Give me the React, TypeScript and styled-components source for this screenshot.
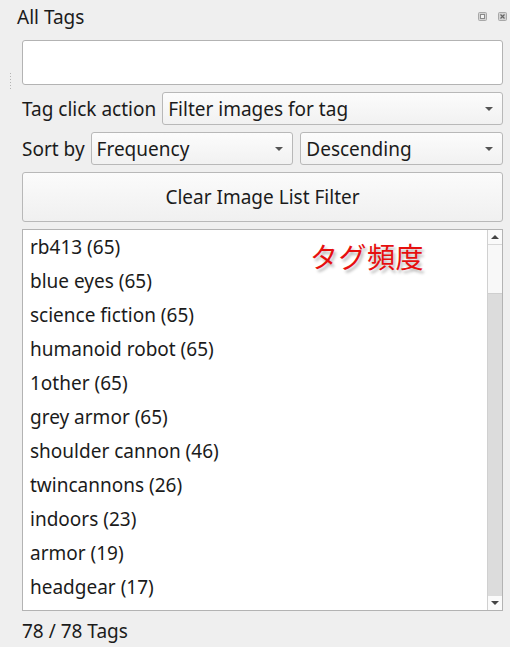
import { createGlobalStyle } from 'styled-components'
import styled from 'styled-components'

const GlobalStyle = createGlobalStyle`
  html, body {
    margin: 0;
    padding: 0;
    background: #efefef;
  }
  body {
    font-family: "Noto Sans", "Noto Sans CJK JP", sans-serif;
    color: #1b1b1b;
  }
`

const Dock = styled.div`
  width: 510px;
  height: 647px;
  box-sizing: border-box;
  display: flex;
  flex-direction: column;
  background: #efefef;
  overflow: hidden;
`

const TitleBar = styled.div`
  height: 36px;
  flex-shrink: 0;
  display: flex;
  align-items: center;
  justify-content: space-between;
  padding: 0 3px 2px 17px;
  box-sizing: border-box;
  font-size: 19px;
`

const TitleButtons = styled.div`
  display: flex;
  gap: 11px;
  align-items: center;
  margin-top: -2px;
`

const Body = styled.div`
  display: flex;
  flex-direction: column;
  gap: 7px;
  padding: 4px 7px 0 22px;
  position: relative;
  & > * {
    flex-shrink: 0;
  }
`

const Grip = styled.div`
  position: absolute;
  left: 10px;
  top: 37px;
  width: 1px;
  height: 17px;
  background-image: linear-gradient(#b4b4b4 1px, transparent 1px);
  background-size: 1px 3px;
`

const TextInput = styled.div`
  height: 45px;
  box-sizing: border-box;
  background: #fff;
  border: 1px solid #b3b3b3;
  border-radius: 3px;
`

const Row = styled.div`
  display: flex;
  align-items: center;
  gap: 7px;
  height: 33px;
  font-size: 19px;
`

const Label = styled.span`
  white-space: nowrap;
  margin-right: -1px;
`

const Combo = styled.div`
  flex: 1;
  height: 33px;
  box-sizing: border-box;
  border: 1px solid #b8b8b8;
  border-radius: 3px;
  background: linear-gradient(#fcfcfc, #f1f1f1);
  display: flex;
  align-items: center;
  justify-content: space-between;
  padding: 0 9px 0 5px;
  font-size: 19px;
  min-width: 0;
`

const Arrow = styled.span`
  width: 0;
  height: 0;
  border-left: 4px solid transparent;
  border-right: 4px solid transparent;
  border-top: 4px solid #555;
`

const Button = styled.div`
  height: 50px;
  box-sizing: border-box;
  border: 1px solid #b8b8b8;
  border-radius: 3px;
  background: linear-gradient(#fbfbfb, #f0f0f0);
  display: flex;
  align-items: center;
  justify-content: center;
  font-size: 19px;
`

const List = styled.div`
  height: 382px;
  box-sizing: border-box;
  border: 1px solid #b3b3b3;
  background: #fff;
  display: flex;
  position: relative;
`

const Items = styled.div`
  flex: 1;
  overflow: hidden;
  padding-left: 7px;
`

const Item = styled.div`
  height: 34px;
  line-height: 34px;
  font-size: 19px;
  white-space: nowrap;
`

const ScrollBar = styled.div`
  width: 14px;
  display: flex;
  flex-direction: column;
  background: #dcdcdc;
  border-left: 1px solid #d0d0d0;
`

const ScrollButton = styled.div`
  height: 14px;
  background: #fafafa;
  display: flex;
  align-items: center;
  justify-content: center;
`

const Thumb = styled.div`
  height: 50px;
  box-sizing: border-box;
  background: #f8f8f8;
  border-top: 1px solid #d8d8d8;
  border-bottom: 1px solid #cfcfcf;
`

const Track = styled.div`
  flex: 1;
  background: #dcdcdc;
`

const TriUp = styled.span`
  width: 0;
  height: 0;
  border-left: 4px solid transparent;
  border-right: 4px solid transparent;
  border-bottom: 4px solid #444;
`

const TriDown = styled.span`
  width: 0;
  height: 0;
  border-left: 4px solid transparent;
  border-right: 4px solid transparent;
  border-top: 4px solid #444;
`

const Overlay = styled.div`
  position: absolute;
  left: 287px;
  top: 6px;
  color: #e60f0f;
  font-family: "Noto Sans CJK JP", sans-serif;
  font-size: 28px;
  letter-spacing: 0.5px;
  text-shadow: 2px 3px 3px rgba(0, 0, 0, 0.28);
`

const Footer = styled.div`
  height: 29px;
  margin-top: -7px;
  padding-top: 5px;
  display: flex;
  align-items: center;
  font-size: 19px;
`

const tags = [
  'rb413 (65)',
  'blue eyes (65)',
  'science fiction (65)',
  'humanoid robot (65)',
  '1other (65)',
  'grey armor (65)',
  'shoulder cannon (46)',
  'twincannons (26)',
  'indoors (23)',
  'armor (19)',
  'headgear (17)',
]

function FloatIcon() {
  return (
    <svg width="9" height="9" viewBox="0 0 9 9">
      <rect x="0.5" y="0.5" width="8" height="8" rx="1" fill="#d4d4d4" stroke="#a8a8a8" />
      <rect x="2.5" y="2.5" width="4" height="4" fill="#f4f4f4" stroke="#8a8a8a" />
    </svg>
  )
}

function CloseIcon() {
  return (
    <svg width="9" height="9" viewBox="0 0 9 9">
      <rect x="0.5" y="0.5" width="8" height="8" rx="1" fill="#d4d4d4" stroke="#a8a8a8" />
      <path d="M2.5 2.5 L6.5 6.5 M6.5 2.5 L2.5 6.5" stroke="#666" strokeWidth="1.2" />
    </svg>
  )
}

function App() {
  return (
    <Dock>
      <GlobalStyle />
      <TitleBar>
        <span>All Tags</span>
        <TitleButtons>
          <FloatIcon />
          <CloseIcon />
        </TitleButtons>
      </TitleBar>
      <Body>
        <Grip />
        <TextInput />
        <Row>
          <Label>Tag click action</Label>
          <Combo>
            <span>Filter images for tag</span>
            <Arrow />
          </Combo>
        </Row>
        <Row>
          <Label>Sort by</Label>
          <Combo>
            <span>Frequency</span>
            <Arrow />
          </Combo>
          <Combo>
            <span>Descending</span>
            <Arrow />
          </Combo>
        </Row>
        <Button>Clear Image List Filter</Button>
        <List>
          <Items>
            {tags.map(t => (
              <Item key={t}>{t}</Item>
            ))}
          </Items>
          <ScrollBar>
            <ScrollButton>
              <TriUp />
            </ScrollButton>
            <Thumb />
            <Track />
            <ScrollButton>
              <TriDown />
            </ScrollButton>
          </ScrollBar>
          <Overlay>タグ頻度</Overlay>
        </List>
        <Footer>78 / 78 Tags</Footer>
      </Body>
    </Dock>
  )
}

export default App
